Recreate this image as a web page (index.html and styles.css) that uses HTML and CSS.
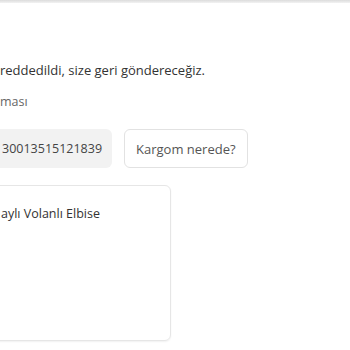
FILE: index.html
```html
<!DOCTYPE html>
<html lang="tr">
<head>
<meta charset="utf-8">
<link rel="stylesheet" href="styles.css">
</head>
<body>
<div class="topline"></div>
<main class="content">
  <p class="msg">reddedildi, size geri göndereceğiz.</p>
  <p class="label">ması</p>
  <div class="actions">
    <div class="tracking">30013515121839</div>
    <button class="btn">Kargom nerede?</button>
  </div>
  <div class="card">
    <p class="product">aylı Volanlı Elbise</p>
  </div>
</main>
</body>
</html>
```
FILE: styles.css
```css
html, body {
  margin: 0;
  padding: 0;
  background: #fff;
  overflow: hidden;
}
body {
  width: 350px;
  height: 350px;
  font-family: "Open Sans", "Liberation Sans", sans-serif;
  color: #333;
}
.topline {
  height: 3px;
  background: linear-gradient(#dcdcdc, #f2f2f2);
}
.content {
  display: flex;
  flex-direction: column;
  align-items: flex-start;
}
.msg {
  margin: 58px 0 0 0;
  font-size: 13px;
  line-height: 18px;
  color: #333;
}
.label {
  margin: 14px 0 0 0;
  font-size: 12.5px;
  line-height: 18px;
  color: #666;
}
.actions {
  display: flex;
  gap: 12px;
  margin-top: 18px;
  margin-left: -12px;
}
.tracking {
  height: 39px;
  display: flex;
  align-items: center;
  padding: 0 10px 0 14px;
  background: #f2f2f2;
  border-radius: 6px;
  font-size: 12.5px;
  color: #444;
}
.btn {
  height: 39px;
  padding: 0 11px;
  background: #fff;
  border: 1px solid #e2e2e2;
  border-radius: 6px;
  font-family: inherit;
  font-size: 13px;
  color: #555;
}
.card {
  margin-top: 17px;
  margin-left: -12px;
  width: 183px;
  height: 156px;
  box-sizing: border-box;
  border: 1px solid #e6e6e6;
  border-radius: 6px;
  box-shadow: 0 1px 2px rgba(0,0,0,0.06);
  padding: 19px 0 0 12px;
}
.product {
  margin: 0;
  font-size: 12.5px;
  line-height: 18px;
  color: #333;
}
```
